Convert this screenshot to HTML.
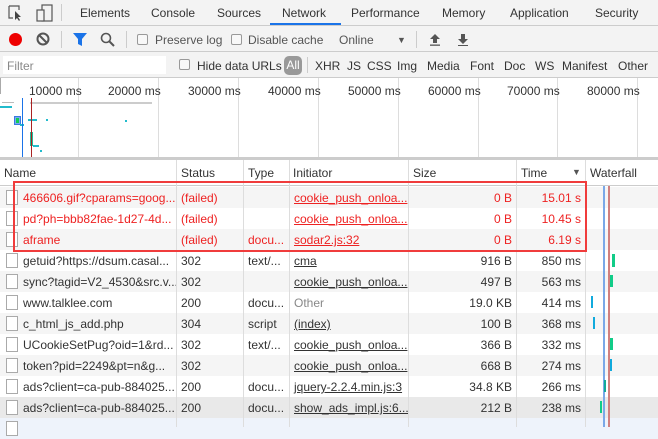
<!DOCTYPE html>
<html><head><style>
*{margin:0;padding:0;box-sizing:border-box}
body{width:658px;height:427px;overflow:hidden;background:#fff;font-family:"Liberation Sans",sans-serif;font-size:12px;color:#333;position:relative}
.a{position:absolute;white-space:nowrap}
.bar{position:absolute;left:0;width:658px;background:#f3f3f3}
.cb{position:absolute;width:11px;height:11px;border:1px solid #999;border-radius:2px;background:#f8f8f8}
.row{position:absolute;left:0;width:658px;height:21px}
.row span{position:absolute;top:4px;white-space:nowrap}
.row .s{right:146px}
.row .t{right:77px}
.u{text-decoration:underline}
.ic{position:absolute;left:6px;top:3px;width:12px;height:15px;border:1px solid #aaa;background:#fff}
.vl{position:absolute;top:160px;height:267px;width:1px;background:#ddd}
</style></head><body>
<div class="bar" style="top:0;height:26px;border-bottom:1px solid #ccc"></div>
<svg class="a" style="left:6px;top:4px" width="50" height="18">
<path d="M3 2h10v4M3 2v12h4" fill="none" stroke="#555" stroke-width="1.2"/><path d="M9 7l6 6-3 0 2 3-1 1-2-3-2 2z" fill="#444"/>
<rect x="36" y="1" width="10" height="16" fill="none" stroke="#555" stroke-width="1.2"/><rect x="31" y="6" width="7" height="11" fill="#f3f3f3" stroke="#555" stroke-width="1.2"/>
</svg>
<div class="a" style="left:61px;top:4px;width:1px;height:17px;background:#ccc"></div>
<div class="a" style="left:80px;top:6px;color:#333">Elements</div>
<div class="a" style="left:151px;top:6px">Console</div>
<div class="a" style="left:217px;top:6px">Sources</div>
<div class="a" style="left:282px;top:6px">Network</div>
<div class="a" style="left:270px;top:23px;width:71px;height:2px;background:#1a73e8"></div>
<div class="a" style="left:351px;top:6px">Performance</div>
<div class="a" style="left:442px;top:6px">Memory</div>
<div class="a" style="left:510px;top:6px">Application</div>
<div class="a" style="left:595px;top:6px">Security</div>
<div class="bar" style="top:26px;height:26px;border-bottom:1px solid #ccc"></div>
<div class="a" style="left:9px;top:33px;width:13px;height:13px;border-radius:50%;background:#e00"></div>
<svg class="a" style="left:36px;top:32px" width="14" height="14"><circle cx="7" cy="7" r="5.5" fill="none" stroke="#555" stroke-width="2"/><path d="M3 3l8 8" stroke="#555" stroke-width="2"/></svg>
<div class="a" style="left:61px;top:31px;width:1px;height:17px;background:#ccc"></div>
<svg class="a" style="left:73px;top:33px" width="14" height="13"><path d="M0 0h14l-5 6v7l-4-2v-5z" fill="#1a73e8"/></svg>
<svg class="a" style="left:100px;top:32px" width="15" height="15"><circle cx="6" cy="6" r="4.5" fill="none" stroke="#555" stroke-width="1.6"/><path d="M9 9l5 5" stroke="#555" stroke-width="2"/></svg>
<div class="a" style="left:126px;top:31px;width:1px;height:17px;background:#ccc"></div>
<div class="cb" style="left:137px;top:34px"></div>
<div class="a" style="left:155px;top:33px;color:#555">Preserve log</div>
<div class="cb" style="left:231px;top:34px"></div>
<div class="a" style="left:248px;top:33px;color:#555">Disable cache</div>
<div class="a" style="left:339px;top:33px;color:#555">Online</div>
<div class="a" style="left:397px;top:35px;font-size:9px;color:#555">▼</div>
<div class="a" style="left:416px;top:31px;width:1px;height:17px;background:#ccc"></div>
<svg class="a" style="left:429px;top:33px" width="12" height="13"><path d="M6 1l5 5h-3v4h-4v-4h-3z" fill="#555"/><rect x="1" y="11.5" width="10" height="1.3" fill="#555"/></svg>
<svg class="a" style="left:457px;top:33px" width="12" height="13"><path d="M6 11l5-5h-3v-5h-4v5h-3z" fill="#555"/><rect x="1" y="12" width="10" height="1.3" fill="#555"/></svg>
<div class="bar" style="top:52px;height:26px;border-bottom:1px solid #ccc"></div>
<div class="a" style="left:3px;top:56px;width:163px;height:18px;background:#fff"></div>
<div class="a" style="left:7px;top:59px;color:#888">Filter</div>
<div class="cb" style="left:179px;top:59px"></div>
<div class="a" style="left:197px;top:59px;color:#333">Hide data URLs</div>
<div class="a" style="left:284px;top:56px;width:18px;height:19px;border-radius:5px;background:#999;color:#fff;text-align:center;line-height:19px">All</div>
<div class="a" style="left:307px;top:57px;width:1px;height:16px;background:#ccc"></div>
<div class="a" style="left:315px;top:59px">XHR</div>
<div class="a" style="left:347px;top:59px">JS</div>
<div class="a" style="left:367px;top:59px">CSS</div>
<div class="a" style="left:397px;top:59px">Img</div>
<div class="a" style="left:427px;top:59px">Media</div>
<div class="a" style="left:470px;top:59px">Font</div>
<div class="a" style="left:504px;top:59px">Doc</div>
<div class="a" style="left:535px;top:59px">WS</div>
<div class="a" style="left:562px;top:59px">Manifest</div>
<div class="a" style="left:618px;top:59px">Other</div>
<div class="a" style="left:0;top:78px;width:658px;height:80px;background:#fff"></div>
<div class="a" style="left:0;top:78px;width:1px;height:16px;background:#aaa"></div>
<div class="a" style="left:78px;top:78px;width:1px;height:80px;background:#ddd"></div>
<div class="a" style="left:158px;top:78px;width:1px;height:80px;background:#ddd"></div>
<div class="a" style="left:238px;top:78px;width:1px;height:80px;background:#ddd"></div>
<div class="a" style="left:318px;top:78px;width:1px;height:80px;background:#ddd"></div>
<div class="a" style="left:398px;top:78px;width:1px;height:80px;background:#ddd"></div>
<div class="a" style="left:478px;top:78px;width:1px;height:80px;background:#ddd"></div>
<div class="a" style="left:557px;top:78px;width:1px;height:80px;background:#ddd"></div>
<div class="a" style="left:637px;top:78px;width:1px;height:80px;background:#ddd"></div>
<div class="a" style="left:29px;top:84px">10000 ms</div>
<div class="a" style="left:108px;top:84px">20000 ms</div>
<div class="a" style="left:188px;top:84px">30000 ms</div>
<div class="a" style="left:268px;top:84px">40000 ms</div>
<div class="a" style="left:348px;top:84px">50000 ms</div>
<div class="a" style="left:428px;top:84px">60000 ms</div>
<div class="a" style="left:507px;top:84px">70000 ms</div>
<div class="a" style="left:587px;top:84px">80000 ms</div>
<div class="a" style="left:30px;top:102px;width:122px;height:2px;background:#ccc"></div>
<div class="a" style="left:2px;top:102px;width:12px;height:1px;background:#bbb"></div>
<div class="a" style="left:0;top:106px;width:12px;height:2px;background:#2bc"></div>
<div class="a" style="left:14px;top:116px;width:7px;height:9px;background:#7aaaf0;border:1px solid #3a7ae0"></div>
<div class="a" style="left:16px;top:118px;width:3px;height:5px;background:#1c5"></div>
<div class="a" style="left:28px;top:119px;width:9px;height:2px;background:#2bc"></div>
<div class="a" style="left:20px;top:124px;width:4px;height:2px;background:#2bc"></div>
<div class="a" style="left:30px;top:132px;width:3px;height:14px;background:#2b9"></div>
<div class="a" style="left:33px;top:145px;width:6px;height:2px;background:#2bc"></div>
<div class="a" style="left:40px;top:150px;width:2px;height:2px;background:#2bc"></div>
<div class="a" style="left:46px;top:119px;width:2px;height:2px;background:#2bc"></div>
<div class="a" style="left:125px;top:120px;width:2px;height:2px;background:#2bc"></div>
<div class="a" style="left:22px;top:98px;width:1px;height:60px;background:#1a73e8"></div>
<div class="a" style="left:31px;top:98px;width:1px;height:60px;background:#a22"></div>
<div class="a" style="left:0;top:157px;width:658px;height:3px;background:#ccc"></div>
<div class="row" style="top:160px;height:26px;background:#fff;border-bottom:1px solid #ccc">
<span style="left:4px;top:6px">Name</span><span style="left:181px;top:6px">Status</span><span style="left:248px;top:6px">Type</span><span style="left:293px;top:6px">Initiator</span><span style="left:413px;top:6px">Size</span><span style="left:521px;top:6px">Time</span><span style="left:572px;top:7px;font-size:9px;color:#555">▼</span><span style="left:590px;top:6px">Waterfall</span>
</div>
<div class="row" style="top:187px;background:#f5f5f5;color:#e22"><div class="ic"></div><span style="left:23px">466606.gif?cparams=goog...</span><span style="left:181px">(failed)</span><span class="u" style="left:294px">cookie_push_onloa...</span><span class="s">0 B</span><span class="t">15.01 s</span></div>
<div class="row" style="top:208px;background:#fff;color:#e22"><div class="ic"></div><span style="left:23px">pd?ph=bbb82fae-1d27-4d...</span><span style="left:181px">(failed)</span><span class="u" style="left:294px">cookie_push_onloa...</span><span class="s">0 B</span><span class="t">10.45 s</span></div>
<div class="row" style="top:229px;background:#f5f5f5;color:#e22"><div class="ic"></div><span style="left:23px">aframe</span><span style="left:181px">(failed)</span><span style="left:248px">docu...</span><span class="u" style="left:294px">sodar2.js:32</span><span class="s">0 B</span><span class="t">6.19 s</span></div>
<div class="row" style="top:250px;background:#fff"><div class="ic"></div><span style="left:23px">getuid?https://dsum.casal...</span><span style="left:181px">302</span><span style="left:248px">text/...</span><span class="u" style="left:294px">cma</span><span class="s">916 B</span><span class="t">850 ms</span></div>
<div class="row" style="top:271px;background:#f5f5f5"><div class="ic"></div><span style="left:23px">sync?tagid=V2_4530&amp;src.v...</span><span style="left:181px">302</span><span class="u" style="left:294px">cookie_push_onloa...</span><span class="s">497 B</span><span class="t">563 ms</span></div>
<div class="row" style="top:292px;background:#fff"><div class="ic"></div><span style="left:23px">www.talklee.com</span><span style="left:181px">200</span><span style="left:248px">docu...</span><span style="left:294px;color:#888">Other</span><span class="s">19.0 KB</span><span class="t">414 ms</span></div>
<div class="row" style="top:313px;background:#f5f5f5"><div class="ic"></div><span style="left:23px">c_html_js_add.php</span><span style="left:181px">304</span><span style="left:248px">script</span><span class="u" style="left:294px">(index)</span><span class="s">100 B</span><span class="t">368 ms</span></div>
<div class="row" style="top:334px;background:#fff"><div class="ic"></div><span style="left:23px">UCookieSetPug?oid=1&amp;rd...</span><span style="left:181px">302</span><span style="left:248px">text/...</span><span class="u" style="left:294px">cookie_push_onloa...</span><span class="s">366 B</span><span class="t">332 ms</span></div>
<div class="row" style="top:355px;background:#f5f5f5"><div class="ic"></div><span style="left:23px">token?pid=2249&amp;pt=n&amp;g...</span><span style="left:181px">302</span><span class="u" style="left:294px">cookie_push_onloa...</span><span class="s">668 B</span><span class="t">274 ms</span></div>
<div class="row" style="top:376px;background:#fff"><div class="ic"></div><span style="left:23px">ads?client=ca-pub-884025...</span><span style="left:181px">200</span><span style="left:248px">docu...</span><span class="u" style="left:294px">jquery-2.2.4.min.js:3</span><span class="s">34.8 KB</span><span class="t">266 ms</span></div>
<div class="row" style="top:397px;background:#e9e9e9"><div class="ic"></div><span style="left:23px">ads?client=ca-pub-884025...</span><span style="left:181px">200</span><span style="left:248px">docu...</span><span class="u" style="left:294px">show_ads_impl.js:6...</span><span class="s">212 B</span><span class="t">238 ms</span></div>
<div class="row" style="top:418px;background:#eef3fb"><div class="ic"></div></div>
<div class="vl" style="left:176px"></div><div class="vl" style="left:243px"></div><div class="vl" style="left:289px"></div><div class="vl" style="left:408px"></div><div class="vl" style="left:516px"></div><div class="vl" style="left:585px"></div>
<div class="a" style="left:603px;top:186px;width:2px;height:241px;background:#7aa8e8"></div>
<div class="a" style="left:608px;top:186px;width:2px;height:241px;background:#d08080"></div>
<div class="a" style="left:612px;top:254px;width:3px;height:13px;background:#1c8"></div>
<div class="a" style="left:610px;top:275px;width:3px;height:12px;background:#1c8"></div>
<div class="a" style="left:591px;top:296px;width:2px;height:12px;background:#1ad"></div>
<div class="a" style="left:593px;top:317px;width:2px;height:12px;background:#1ad"></div>
<div class="a" style="left:610px;top:338px;width:3px;height:12px;background:#1c8"></div>
<div class="a" style="left:610px;top:359px;width:2px;height:12px;background:#1ad"></div>
<div class="a" style="left:604px;top:380px;width:2px;height:12px;background:#1a9"></div>
<div class="a" style="left:600px;top:401px;width:2px;height:12px;background:#1c8"></div>
<div class="a" style="left:13px;top:181px;width:574px;height:71px;border:2px solid #f03c3c"></div>
</body></html>
